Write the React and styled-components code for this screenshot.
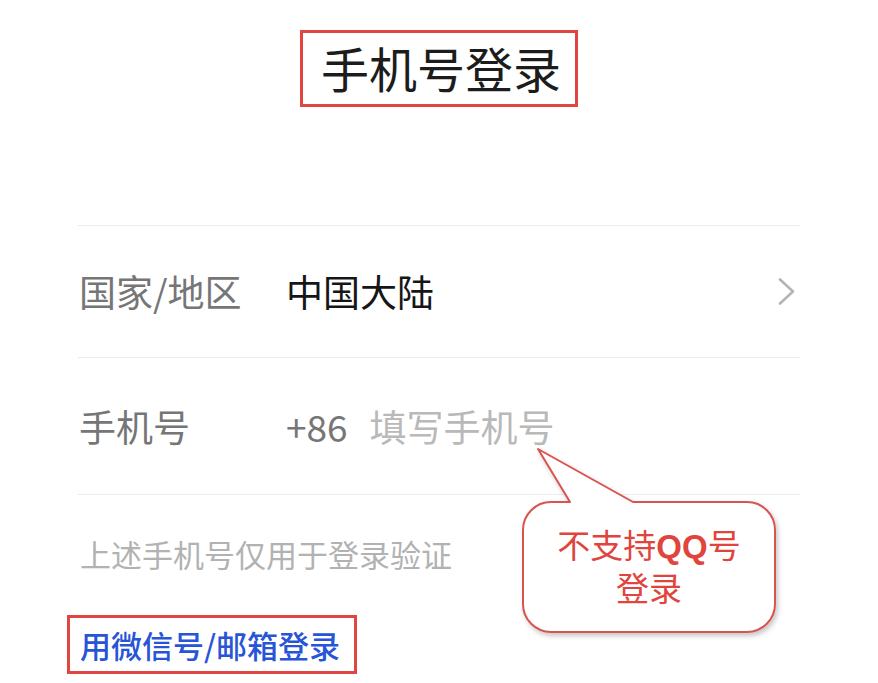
import React from 'react';
import styled, { createGlobalStyle } from 'styled-components';

const Global = createGlobalStyle`
  html, body { margin: 0; padding: 0; background: #ffffff; }
  body { font-family: "Noto Sans CJK SC", "Noto Sans", sans-serif; }
`;

const Page = styled.div`
  position: relative;
  width: 878px;
  height: 683px;
  overflow: hidden;
  box-sizing: border-box;
  padding: 0 78px;
  display: flex;
  flex-direction: column;
  background: #fff;
`;

const Header = styled.div`
  height: 225px;
  box-sizing: border-box;
  padding-top: 30px;
  display: flex;
  justify-content: center;
  align-items: flex-start;
`;

const TitleBox = styled.h1`
  margin: 0;
  height: 77px;
  box-sizing: border-box;
  border: 3px solid #e0463f;
  padding: 0 14px 4px 18px;
  display: flex;
  align-items: center;
  font-size: 48px;
  font-weight: 400;
  line-height: 1;
  color: #1c1c1c;
`;

const List = styled.div`
  display: flex;
  flex-direction: column;
  border-bottom: 1px solid #ececec;
`;

const Row = styled.div`
  height: ${p => p.$h}px;
  box-sizing: border-box;
  border-top: 1px solid #ececec;
  display: flex;
  align-items: center;
  padding-left: 1px;
`;

const Label = styled.div`
  width: 207px;
  flex: none;
  font-size: 37px;
  line-height: 1;
  color: #767676;
`;

const Value = styled.div`
  flex: 1;
  display: flex;
  align-items: center;
  gap: 22px;
  font-size: 37px;
  line-height: 1;
  color: ${p => p.$dark ? '#161616' : '#767676'};
`;

const Placeholder = styled.span`
  color: #b9b9b9;
`;

const Chevron = styled.svg`
  width: 19px;
  height: 29px;
  margin-right: 4px;
  flex: none;
`;

const Note = styled.div`
  margin-top: 37px;
  padding-left: 2px;
  font-size: 31px;
  line-height: 1.4;
  color: #b2b2b2;
`;

const LinkBox = styled.a`
  align-self: flex-start;
  margin-top: 40px;
  margin-left: -11px;
  height: 59px;
  box-sizing: border-box;
  border: 3px solid #e0463f;
  padding: 0 14px 0 10px;
  display: flex;
  align-items: center;
  font-size: 31px;
  font-weight: 500;
  line-height: 1;
  color: #2855d6;
  text-decoration: none;
`;

const Callout = styled.div`
  position: absolute;
  left: 520px;
  top: 445px;
  width: 264px;
  height: 196px;
`;

const BubbleSvg = styled.svg`
  position: absolute;
  inset: 0;
  overflow: visible;
`;

const BubbleText = styled.div`
  position: absolute;
  left: 3px;
  top: 57px;
  width: 252px;
  height: 130px;
  display: flex;
  flex-direction: column;
  align-items: center;
  justify-content: center;
  font-size: 33px;
  line-height: 40px;
  color: #e0443c;
  text-align: center;
  padding-bottom: 4px;
  box-sizing: border-box;
`;

const Bold = styled.b`
  font-family: "Liberation Sans", Arial, sans-serif;
  font-weight: 700;
`;

export default function App() {
  return (
    <>
      <Global />
      <Page>
        <Header>
          <TitleBox>手机号登录</TitleBox>
        </Header>
        <List>
          <Row $h={132}>
            <Label>国家/地区</Label>
            <Value $dark>中国大陆</Value>
            <Chevron viewBox="0 0 19 29">
              <polyline points="3,2.5 16,14.5 3,26.5" fill="none" stroke="#b4b4b4" strokeWidth="2.6" strokeLinecap="round" strokeLinejoin="round" />
            </Chevron>
          </Row>
          <Row $h={137}>
            <Label>手机号</Label>
            <Value>
              <span>+86</span>
              <Placeholder>填写手机号</Placeholder>
            </Value>
          </Row>
        </List>
        <Note>上述手机号仅用于登录验证</Note>
        <LinkBox href="#">用微信号/邮箱登录</LinkBox>

        <Callout>
          <BubbleSvg viewBox="0 0 264 196" width="264" height="196">
            <defs>
              <filter id="sh" x="-10%" y="-10%" width="130%" height="130%">
                <feDropShadow dx="2" dy="3" stdDeviation="2.5" floodColor="#000" floodOpacity="0.22" />
              </filter>
            </defs>
            <path
              d="M31 57 L50 57 L18 4 L113 57 L227 57 A28 28 0 0 1 255 85 L255 159 A28 28 0 0 1 227 187 L31 187 A28 28 0 0 1 3 159 L3 85 A28 28 0 0 1 31 57 Z"
              fill="#ffffff"
              stroke="#d9534f"
              strokeWidth="2"
              strokeLinejoin="round"
              filter="url(#sh)"
            />
          </BubbleSvg>
          <BubbleText>
            <div>不支持<Bold>QQ</Bold>号</div>
            <div>登录</div>
          </BubbleText>
        </Callout>
      </Page>
    </>
  );
}
